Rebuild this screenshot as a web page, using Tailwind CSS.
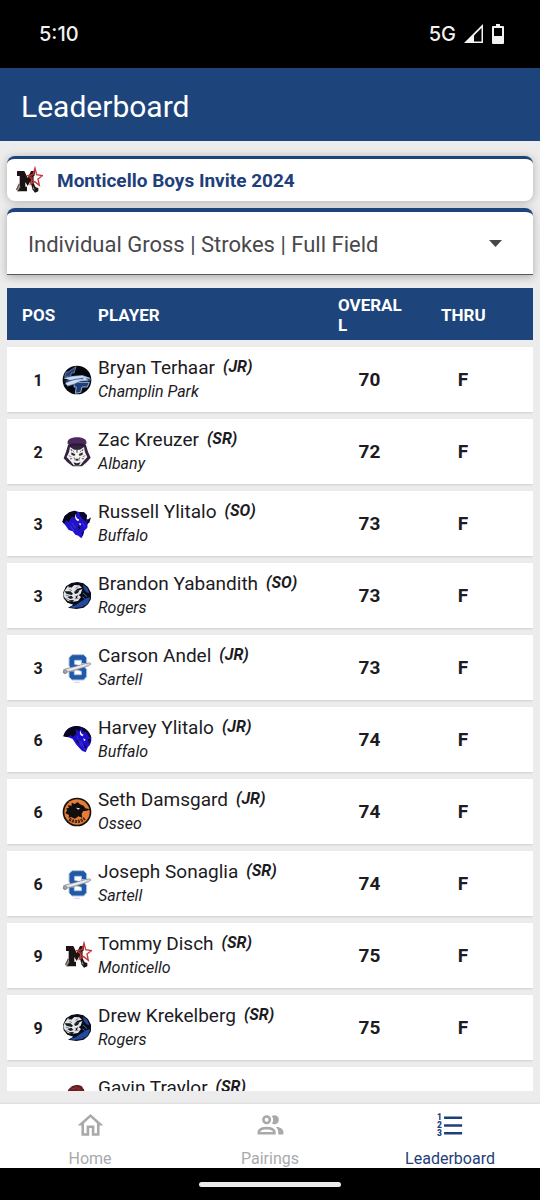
<!DOCTYPE html>
<html lang="en">
<head>
<meta charset="utf-8">
<meta name="viewport" content="width=device-width, initial-scale=1">
<title>Leaderboard</title>
<script src="https://cdn.jsdelivr.net/npm/@tailwindcss/browser@4"></script>
</head>
<body class="flex h-screen flex-col overflow-hidden bg-[#ececec] font-['Roboto',sans-serif] text-[#1c1b1f]">

<!-- Team logos -->
<svg class="hidden" aria-hidden="true">
  <symbol id="champlin" viewBox="0 0 90 90">
    <circle cx="45" cy="45" r="43" fill="#05070c"/>
    <path d="M20 20L42 5L36 24H28L26 34H8L12 22Z" fill="#1d3f7c" stroke="#8aa0bd" stroke-width="2"/>
    <path d="M38 52H82L76 66H60L56 82L40 85L43 66H36Z" fill="#1d3f7c" stroke="#9cb0ca" stroke-width="3"/>
    <path d="M4 38L30 33L60 30L84 38L88 45L76 50L58 48L40 58L14 66L26 56L6 60L22 50L3 49L20 44Z" fill="#2a5598"/>
    <path d="M6 40L36 34L62 32L84 40L62 38L40 41L24 45M10 54L38 45L58 43L78 45L54 48L36 56L16 62" fill="#cfdded" stroke="#b4c9e0" stroke-width="1.500"/>
    <path d="M62 39L76 41L68 45Z" fill="#fff"/>
  </symbol>
  <symbol id="albany" viewBox="0 0 90 90">
    <path d="M18 24L72 24L78 44L86 62L74 76L60 88H32L16 76L5 64L12 44Z" fill="#35233f"/>
    <path d="M17 20C14 8 26 1 45 1S76 8 73 20L66 28H24Z" fill="#4c2a61"/>
    <path d="M22 22Q45 15 69 22L66 29Q45 23 24 29Z" fill="#2b1a35"/>
    <path d="M24 30L36 38H54L66 30L69 46L76 60L65 72L55 85H35L25 72L14 60L21 46Z" fill="#f3f3f1"/>
    <path d="M28 46L40 52L37 57L28 53ZM62 46L50 52L53 57L62 53ZM39 65H51L45 73ZM43 34H47L46 48H44ZM24 62L32 66L26 67ZM66 62L58 66L64 67ZM34 76L45 79L56 76L51 84H39ZM26 35L31 40L27 42ZM64 35L59 40L63 42Z" fill="#2b272d"/>
    <path d="M36 60L40 72M54 60L50 72M32 40L36 46M58 40L54 46M20 56L28 59M70 56L62 59" stroke="#77727b" stroke-width="2.500" fill="none"/>
  </symbol>
  <symbol id="buffalo" viewBox="0 0 90 90">
    <path d="M1 38L8 21L22 10L38 5L52 9L66 10L75 19L73 30L84 32L77 45L76 56L66 66L64 78L58 88L49 80L40 77L32 67L20 63L10 49Z" fill="#2013c9"/>
    <path d="M1 38L8 21L22 10L38 5L46 10L36 26L30 22L20 39L12 34L7 45Z" fill="#080617"/>
    <path d="M52 9L66 10L75 19L72 38L62 30L54 20ZM77 32L87 25L82 41L73 46ZM48 48L56 56L50 62ZM60 70L67 66L60 82Z" fill="#0c0828"/>
    <path d="M42 14Q35 28 46 35Q52 38 51 31Q40 28 42 14ZM51 42L58 44L54 50Z" fill="#fff"/>
    <path d="M62 42L68 53M30 42L40 57M24 50L36 66" stroke="#4f47ed" stroke-width="2" fill="none"/>
  </symbol>
  <symbol id="buffalo-round" viewBox="0 0 90 90">
    <path d="M4 34C10 12 28 2 46 3C68 5 83 19 88 38C89 51 85 60 78 66L71 82L60 77L50 67L42 58L32 42L18 36Z" fill="#2010cc"/>
    <path d="M4 34C10 12 28 2 46 3L58 6L54 17L40 14L43 26L33 36L25 30L18 37Z" fill="#08061b"/>
    <path d="M58 6C74 11 84 22 88 38L80 35L73 22L61 20ZM76 41L87 43L83 57ZM48 40L54 56L44 52ZM66 58L73 66L67 72Z" fill="#0d082c"/>
    <path d="M56 16Q49 28 61 34L65 29Q55 28 56 16ZM64 40L71 44L66 49Z" fill="#fff"/>
    <path d="M45 34L58 64M56 48L70 76" stroke="#4941eb" stroke-width="2" fill="none"/>
  </symbol>
  <symbol id="rogers" viewBox="0 0 90 90">
    <path d="M3 35L12 16L28 6L46 3L64 7L78 18L87 35L87 54L78 70L65 80L43 84L18 80L34 71L16 65L5 52Z" fill="#080b18"/>
    <path d="M62 10L76 21L82 37L74 34L66 25ZM56 62L76 50L86 49L76 69L60 78L36 81L22 79L40 73Z" fill="#23489c"/>
    <path d="M8 29L18 15L28 20L37 12L52 13L60 20L46 23L38 31L51 28L61 24L56 38L50 42L57 48L48 60L32 62L17 60L7 49L4 39Z" fill="#e4e4e2"/>
    <path d="M8 31L25 31L33 38L29 42L13 38ZM36 32L53 26L48 36L39 39ZM16 48L28 44L34 51L25 54ZM20 12L28 17L20 20ZM40 47L48 42L44 55ZM20 58L36 57L30 65Z" fill="#171b25"/>
    <path d="M11 43L22 45M38 53L49 52M12 53L20 56M49 17L40 22M22 25L30 29" stroke="#7d8492" stroke-width="3" fill="none"/>
    <path d="M63 36L75 47M62 47L70 56" stroke="#3c62b3" stroke-width="3" fill="none"/>
  </symbol>
  <symbol id="sartell" viewBox="0 0 90 90">
    <path d="M30 5H65L74 14V32H58V22H38V34L68 42L74 49V71L65 81H30L21 72V54H37V65H58V55L28 46L21 39V14Z" fill="#2258a8" stroke="#b3c7e0" stroke-width="3"/>
    <path d="M5 50L13 47L83 29L87 33L80 38L45 50L16 57L10 62L4 60Z" fill="#d4d5d8" stroke="#77797f" stroke-width="2"/>
    <path d="M16 52L72 35" stroke="#f9f9f9" stroke-width="3"/>
    <circle cx="10" cy="56" r="5" fill="#aaa" stroke="#70727a" stroke-width="2"/>
    <path d="M37 88H53" stroke="#b9b5dc" stroke-width="2"/>
  </symbol>
  <symbol id="osseo" viewBox="0 0 90 90">
    <circle cx="45" cy="45" r="43" fill="#17110e"/>
    <circle cx="45" cy="45" r="38" fill="#e57d36"/>
    <path d="M10 49L16 39L11 35L21 32L17 25L29 26L29 17L38 21L47 15L54 22L65 26L70 34L84 37L75 41L63 43L59 51L61 62L49 58L39 65L27 60L20 63L21 54Z" fill="#120e0d"/>
    <path d="M42 32L54 34L49 38Z" fill="#f6efe8"/>
    <path d="M22 66Q45 82 68 64" fill="none" stroke="#2b1a10" stroke-width="9" stroke-dasharray="6 3"/>
    <path d="M23 66Q45 81 67 65" fill="none" stroke="#d7834b" stroke-width="2" stroke-dasharray="3 6"/>
  </symbol>
  <symbol id="monticello" viewBox="0 0 90 90">
    <path d="M12 15H34L44 36L54 15H66V30H62V52L68 64L76 66V76L66 80L58 70L55 56L51 48L44 60L37 48V62H42V76H14V62H20V30H12Z" fill="#1b1412"/>
    <path d="M19 48L22 64L13 78L10 68ZM60 60L66 72L59 68Z" fill="#9d908d"/>
    <path d="M19 54L10 72M24 58L18 76" stroke="#2a2220" stroke-width="2"/>
    <path d="M66 6L71 26L88 29L75 39L79 58L65 47L52 54L57 39L44 29L60 26Z" fill="none" stroke="#c7363a" stroke-width="4"/>
    <path d="M66 18L68 30L76 32L69 38L71 46L63 40" fill="#fff"/>
    <path d="M52 30L63 39L54 50" fill="none" stroke="#d9655f" stroke-width="2"/>
  </symbol>
  <symbol id="maroon" viewBox="0 0 90 90">
    <path d="M20 14L30 5L44 1L58 4L65 15L68 35L55 60L30 60L17 35Z" fill="#741d24" stroke="#43191c" stroke-width="3"/>
    <path d="M30 12L43 8L53 13" stroke="#96343a" stroke-width="3" fill="none"/>
  </symbol>
</svg>

<div class="flex h-[68px] shrink-0 items-center justify-between bg-black pr-9 pl-[39px] font-['Inter',sans-serif] text-xl font-medium text-[#f2f2f2]">
  <time>5:10</time>
  <div class="flex items-center gap-2">
    <span>5G</span>
    <svg class="h-5 w-5" viewBox="0 0 20 20" role="img" aria-label="Signal"><path d="M0 19L19 0V19Z" fill="#f2f2f2"/><path d="M10 11.500L17.500 4V17.500H10Z" fill="#000"/></svg>
    <svg class="h-5 w-3" viewBox="0 0 12 20" role="img" aria-label="Battery"><path d="M4 0H8V2H11Q12 2 12 3V19Q12 20 11 20H1Q0 20 0 19V3Q0 2 1 2H4Z" fill="#f2f2f2"/><path d="M2 4H10V12H2Z" fill="#000"/></svg>
  </div>
</div>

<header class="flex h-[73px] shrink-0 items-center bg-[#1d457c] px-[21px] pt-1">
  <h1 class="text-[30px] leading-9 text-white">Leaderboard</h1>
</header>

<main class="flex min-h-0 flex-1 flex-col px-[7px] pt-[15px] pb-[13px]">
  <section class="mb-[7px] flex h-[45px] shrink-0 items-center gap-[14px] rounded-lg border-t-3 border-[#1d457c] bg-white px-[6px] pt-[2px] shadow-[0_1px_8px_rgba(0,0,0,0.25)]">
    <svg class="h-[30px] w-[30px]" viewBox="0 0 90 90" role="img" aria-label="Monticello"><use href="#monticello"/></svg>
    <h2 class="text-[19px] leading-6 font-bold text-[#1e407a]">Monticello Boys Invite 2024</h2>
  </section>

  <div class="relative h-[67px] shrink-0 rounded-t-lg border-t-4 border-b border-t-[#1d457c] border-b-[#5b5860] bg-white shadow-[0_2px_8px_rgba(0,0,0,0.28)]">
    <select aria-label="Leaderboard view" class="h-full w-full appearance-none bg-transparent pt-[2px] pr-12 pl-[21px] text-[22px] text-[#49484d]">
      <option>Individual Gross | Strokes | Full Field</option>
    </select>
    <svg class="pointer-events-none absolute top-7 right-[31px] h-[7px] w-[13px]" viewBox="0 0 13 7" aria-hidden="true"><path d="M0 0H13L6.500 7Z" fill="#48464c"/></svg>
  </div>

  <div class="mt-[6px] min-h-0 flex-1 overflow-hidden">
    <table class="w-full table-fixed border-separate border-spacing-x-0 border-spacing-y-[7px]">
      <colgroup><col class="w-[55px]"><col class="w-[36px]"><col><col class="w-[84px]"><col class="w-[111px]"></colgroup>
      <thead>
        <tr class="h-[52px] bg-[#1d457c] text-left text-[17px] leading-5 text-white">
          <th scope="col" class="pt-[2px] pl-[15px] font-bold">POS</th>
          <th></th>
          <th scope="col" class="pt-[2px] font-bold">PLAYER</th>
          <th scope="col" class="pt-[2px] pr-4 font-bold break-all">OVERALL</th>
          <th scope="col" class="pt-[2px] pl-[19px] font-bold">THRU</th>
        </tr>
      </thead>
      <tbody id="rows"></tbody>
    </table>
  </div>
</main>

<nav class="grid h-16 shrink-0 grid-cols-3 bg-white text-center text-base leading-5 text-[#a9a9ac] shadow-[0_-1px_2px_rgba(0,0,0,0.08)]">
  <a href="#home" class="flex flex-col items-center gap-2 pt-[6px]">
    <svg class="h-[31px] w-[31px] shrink-0" viewBox="0 0 24 24" fill="currentColor" aria-hidden="true"><path d="M12,5.690L17,10.190V18H15V12H9V18H7V10.190L12,5.690M12,3L2,12H5V20H11V14H13V20H19V12H22L12,3Z"/></svg>
    <span>Home</span>
  </a>
  <a href="#pairings" class="flex flex-col items-center gap-2 pt-[6px]">
    <svg class="h-[31px] w-[31px] shrink-0" viewBox="0 0 24 24" fill="currentColor" aria-hidden="true"><path d="M13.070 10.410A5 5 0 0 0 13.070 4.590A3.390 3.390 0 0 1 15 4A3.500 3.500 0 0 1 15 11A3.390 3.390 0 0 1 13.070 10.410M5.500 7.500A3.500 3.500 0 1 1 9 11A3.500 3.500 0 0 1 5.500 7.500M7.500 7.500A1.500 1.500 0 1 0 9 6A1.500 1.500 0 0 0 7.500 7.500M16 17V19H2V17S2 13 9 13 16 17 16 17M14 17C13.860 16.220 12.670 15 9 15S4.070 16.310 4 17M15.950 13A5.320 5.320 0 0 1 18 17V19H22V17S22 13.370 15.940 13Z"/></svg>
    <span>Pairings</span>
  </a>
  <a href="#leaderboard" aria-current="page" class="flex flex-col items-center gap-2 pt-[6px] text-[#1e407a]">
    <svg class="h-[31px] w-[31px] shrink-0" viewBox="0 0 24 24" fill="currentColor" aria-hidden="true"><path d="M7 5H21V7H7ZM7 11H21V13H7ZM7 17H21V19H7Z"/><g font-family="Roboto" font-weight="900" font-size="6.500"><text x="1.500" y="8">1</text><text x="1.500" y="14.300">2</text><text x="1.500" y="20.500">3</text></g></svg>
    <span>Leaderboard</span>
  </a>
</nav>

<div class="flex h-8 shrink-0 items-center justify-center bg-black">
  <div class="h-[5px] w-[142px] rounded-full bg-[#ececec]"></div>
</div>

<script>
const players = [
  [1, 'champlin', 'Bryan Terhaar', 'JR', 'Champlin Park', 70],
  [2, 'albany', 'Zac Kreuzer', 'SR', 'Albany', 72],
  [3, 'buffalo', 'Russell Ylitalo', 'SO', 'Buffalo', 73],
  [3, 'rogers', 'Brandon Yabandith', 'SO', 'Rogers', 73],
  [3, 'sartell', 'Carson Andel', 'JR', 'Sartell', 73],
  [6, 'buffalo-round', 'Harvey Ylitalo', 'JR', 'Buffalo', 74],
  [6, 'osseo', 'Seth Damsgard', 'JR', 'Osseo', 74],
  [6, 'sartell', 'Joseph Sonaglia', 'SR', 'Sartell', 74],
  [9, 'monticello', 'Tommy Disch', 'SR', 'Monticello', 75],
  [9, 'rogers', 'Drew Krekelberg', 'SR', 'Rogers', 75],
  ['', 'maroon', 'Gavin Traylor', 'SR', '', '']
];
document.getElementById('rows').innerHTML = players.map(([pos, logo, name, year, school, score]) => `
  <tr class="h-[65px] bg-white shadow-[0_1px_2px_rgba(0,0,0,0.12)]">
    <td class="pt-[2px] pl-[7px] text-center text-base font-bold">${pos}</td>
    <td><svg class="h-[30px] w-[30px]" viewBox="0 0 90 90" aria-hidden="true"><use href="#${logo}"/></svg></td>
    <td class="pt-px whitespace-nowrap">
      <div class="flex items-start gap-2 text-[19px] leading-6">${name}<b class="text-base leading-[22px] italic">(${year})</b></div>
      <div class="h-6 text-base leading-6 italic">${school}</div>
    </td>
    <td class="pt-[2px] pr-[21px] text-center text-[19px] font-bold">${score}</td>
    <td class="pt-[2px] pr-[30px] pl-px text-center text-[19px] font-bold">${score && 'F'}</td>
  </tr>`).join('');
</script>
</body>
</html>
